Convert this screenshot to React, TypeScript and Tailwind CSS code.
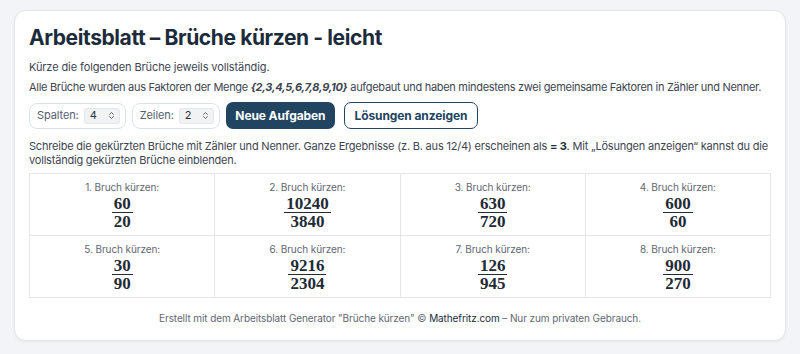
import { ChevronsUpDown } from 'lucide-react'

const fractions = [
  { n: '60', d: '20' },
  { n: '10240', d: '3840' },
  { n: '630', d: '720' },
  { n: '600', d: '60' },
  { n: '30', d: '90' },
  { n: '9216', d: '2304' },
  { n: '126', d: '945' },
  { n: '900', d: '270' },
]

function Picker({ label, value }: { label: string; value: string }) {
  return (
    <div className="flex items-center gap-[5px] h-[26px] pl-[7px] pr-[5px] rounded-lg border border-[#dde3ea] bg-white text-[11px] text-[#55606e]">
      <span>{label}</span>
      <div className="flex items-center gap-[10px] h-[16px] pl-[5px] pr-[3px] rounded-[3px] bg-[#f1f2f4] border border-[#e3e5e8] text-[#2b3340]">
        <span>{value}</span>
        <ChevronsUpDown className="w-[9px] h-[9px] text-[#555]" strokeWidth={2.5} />
      </div>
    </div>
  )
}

export default function App() {
  return (
    <div className="min-h-[354px] bg-[#f2f4f7] pt-[10px] px-[14px] pb-[14px]" style={{ fontFamily: 'Inter, "Noto Sans", sans-serif' }}>
      <div className="rounded-[12px] border border-[#e2e6eb] bg-white px-[14px] pt-[13px] pb-[15px] shadow-[0_1px_3px_rgba(0,0,0,0.05)] tracking-[-0.1px]">
        <h1 className="text-[21px] leading-[28px] font-bold text-[#1c2b3b] tracking-[-0.4px]">
          Arbeitsblatt – Brüche kürzen - leicht
        </h1>

        <p className="mt-[8px] text-[11px] leading-[15px] text-[#3d4550]">
          Kürze die folgenden Brüche jeweils vollständig.
        </p>
        <p className="mt-[5px] text-[11px] leading-[15px] text-[#3d4550] tracking-[-0.3px]">
          Alle Brüche wurden aus Faktoren der Menge{' '}
          <strong className="italic font-bold">{'{2,3,4,5,6,7,8,9,10}'}</strong> aufgebaut und haben mindestens zwei
          gemeinsame Faktoren in Zähler und Nenner.
        </p>

        <div className="mt-[7px] flex items-center gap-[6px]">
          <Picker label="Spalten:" value="4" />
          <Picker label="Zeilen:" value="2" />
          <button className="h-[27px] px-[9px] rounded-[7px] bg-[#214560] text-white text-[12px] font-bold">
            Neue Aufgaben
          </button>
          <button className="ml-[3px] h-[27px] px-[10px] rounded-[7px] border border-[#214560] bg-white text-[#214560] text-[12px] font-bold">
            Lösungen anzeigen
          </button>
        </div>

        <p className="mt-[10px] text-[11px] leading-[14px] text-[#3d4550] tracking-[-0.2px]">
          Schreibe die gekürzten Brüche mit Zähler und Nenner. Ganze Ergebnisse (z. B. aus 12/4) erscheinen als{' '}
          <strong className="font-bold text-[#1c2b3b]">= 3</strong>. Mit „Lösungen anzeigen“ kannst du die vollständig
          gekürzten Brüche einblenden.
        </p>

        <div className="mt-[6px] grid grid-cols-4 border-l border-t border-[#e3e7ec]">
          {fractions.map((f, i) => (
            <div key={i} className="flex flex-col items-center border-r border-b border-[#e3e7ec] pt-[7px] h-[62px]">
              <span className="text-[10px] leading-[13px] text-[#5f6772]">{i + 1}. Bruch kürzen:</span>
              <div className="mt-[2px] flex flex-col items-center text-[17px] leading-[15px] font-bold text-[#222a35] tracking-normal" style={{ fontFamily: '"Liberation Serif", "DejaVu Serif", serif' }}>
                <span className="px-[2px]">{f.n}</span>
                <span className="self-stretch h-[1px] bg-[#222a35] my-[1px]" />
                <span className="px-[2px]">{f.d}</span>
              </div>
            </div>
          ))}
        </div>

        <p className="mt-[13px] text-center text-[10px] leading-[14px] text-[#5f6772]">
          Erstellt mit dem Arbeitsblatt Generator "Brüche kürzen" © <span className="text-[#1c2b3b]">Mathefritz.com</span> – Nur zum privaten Gebrauch.
        </p>
      </div>
    </div>
  )
}
